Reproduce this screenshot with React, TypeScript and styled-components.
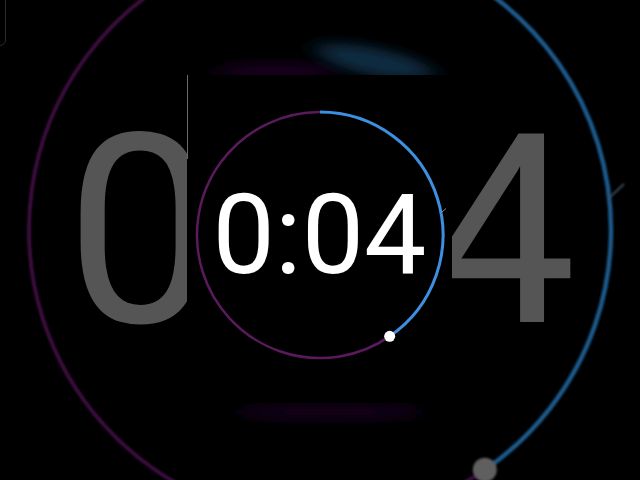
import styled, { createGlobalStyle } from 'styled-components';

const GlobalStyle = createGlobalStyle`
  html, body {
    margin: 0;
    padding: 0;
    background: #000;
  }
`;

const Stage = styled.div`
  position: relative;
  width: 640px;
  height: 480px;
  overflow: hidden;
  background: #000;
  font-family: Roboto, 'Noto Sans', sans-serif;
`;

const Layer = styled.svg`
  position: absolute;
  inset: 0;
`;

// blurred, enlarged copy of the timer behind the panel
const BigTime = styled.div`
  position: absolute;
  inset: 0;
  display: flex;
  align-items: center;
  justify-content: center;
  padding-bottom: 17px;
  padding-left: 2px;
  box-sizing: border-box;
  color: #555555;
  font-size: 265px;
  line-height: 1;
`;

const BigGap = styled.span`
  display: inline-block;
  width: 0.8025em;
`;

const Corner = styled.div`
  position: absolute;
  top: -8px;
  left: -10px;
  width: 14px;
  height: 52px;
  border: 1px solid #2a2a2a;
  border-radius: 0 0 6px 0;
`;

const Panel = styled.div`
  position: absolute;
  left: 187px;
  top: 75px;
  width: 265px;
  height: 328px;
  background: #000;
  display: flex;
  align-items: center;
  justify-content: center;
  padding-bottom: 8px;
  box-sizing: border-box;

  &::before {
    content: '';
    position: absolute;
    left: 0;
    top: 0;
    width: 1px;
    height: 84px;
    background: #6a6a6a;
  }
`;

const Dial = styled.div`
  position: relative;
  width: 252px;
  height: 252px;
  display: flex;
  align-items: center;
  justify-content: center;
`;

const DialRing = styled.svg`
  position: absolute;
  inset: 0;
`;

const Time = styled.span`
  position: relative;
  color: #ffffff;
  font-size: 111px;
  line-height: 1;
  margin-top: 1px;
`;

const arc = (cx: number, cy: number, r: number, from: number, to: number) => {
  const rad = (d: number) => (d * Math.PI) / 180;
  const x1 = cx + r * Math.sin(rad(from));
  const y1 = cy - r * Math.cos(rad(from));
  const x2 = cx + r * Math.sin(rad(to));
  const y2 = cy - r * Math.cos(rad(to));
  const large = to - from > 180 ? 1 : 0;
  return `M ${x1} ${y1} A ${r} ${r} 0 ${large} 1 ${x2} ${y2}`;
};

const point = (cx: number, cy: number, r: number, deg: number) => {
  const a = (deg * Math.PI) / 180;
  return { x: cx + r * Math.sin(a), y: cy - r * Math.cos(a) };
};

const PROGRESS = 145.5;

export default function App() {
  const outerDot = point(320, 230, 291, PROGRESS);
  const innerDot = point(126, 126, 123, PROGRESS);
  return (
    <>
      <GlobalStyle />
      <Stage>
        <Layer width={640} height={480} viewBox='0 0 640 480'>
          <defs>
            <filter id='soft' x='-50%' y='-50%' width='200%' height='200%'>
              <feGaussianBlur stdDeviation='1.2' />
            </filter>
            <filter id='smear' x='-50%' y='-200%' width='200%' height='500%'>
              <feGaussianBlur stdDeviation='12 6' />
            </filter>
          </defs>
          <path
            d={arc(320, 230, 291, PROGRESS, 360)}
            fill='none'
            stroke='#3b0c3e'
            strokeWidth={4}
            filter='url(#soft)'
          />
          <path
            d={arc(320, 230, 291, 0, PROGRESS)}
            fill='none'
            stroke='#1c5a8c'
            strokeWidth={4.5}
            filter='url(#soft)'
          />
          <ellipse cx={275} cy={72} rx={62} ry={10} fill='#14041a' filter='url(#smear)' />
          <ellipse
            cx={375}
            cy={62}
            rx={60}
            ry={14}
            fill='#0a2a40'
            filter='url(#smear)'
            transform='rotate(12 375 62)'
          />
          <ellipse cx={330} cy={412} rx={95} ry={8} fill='#12031a' filter='url(#smear)' />
          <line x1={609} y1={198} x2={624} y2={184} stroke='#3a4a5a' strokeWidth={2} filter='url(#soft)' />
          <circle cx={outerDot.x} cy={outerDot.y} r={12} fill='#5e5e5e' filter='url(#soft)' />
        </Layer>
        <BigTime>
          <span>0</span>
          <BigGap />
          <span>4</span>
        </BigTime>
        <Corner />
        <Panel>
          <Dial>
            <DialRing width={252} height={252} viewBox='0 0 252 252'>
              <path d={arc(126, 126, 123, PROGRESS, 360)} fill='none' stroke='#5a1a5c' strokeWidth={2.5} />
              <path d={arc(126, 126, 123, 0, PROGRESS)} fill='none' stroke='#3e8fe0' strokeWidth={3} />
              <line x1={248} y1={103} x2={256} y2={96} stroke='#8a8a8a' strokeWidth={1} />
              <circle cx={innerDot.x} cy={innerDot.y} r={5.5} fill='#ffffff' />
            </DialRing>
            <Time>0:04</Time>
          </Dial>
        </Panel>
      </Stage>
    </>
  );
}
